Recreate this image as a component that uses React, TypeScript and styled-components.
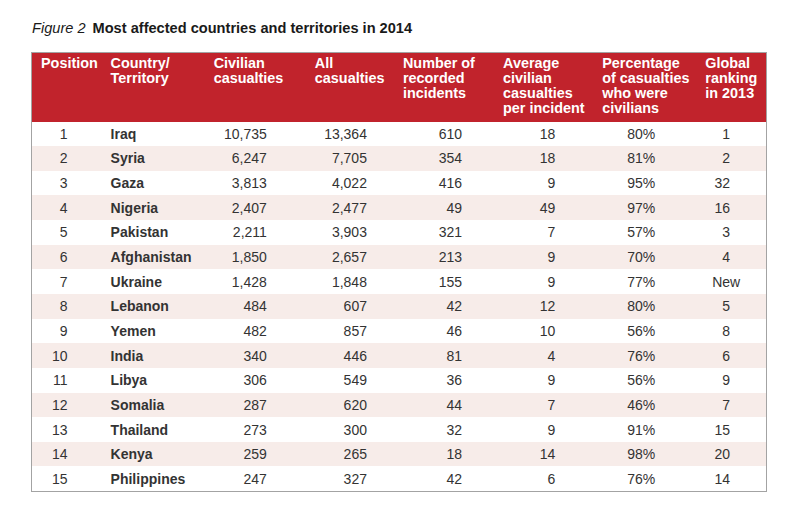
import React from "react";
import styled, { createGlobalStyle } from "styled-components";

const GlobalStyle = createGlobalStyle`
  html, body { margin: 0; padding: 0; background: #ffffff; }
  body { font-family: "Liberation Sans", Arial, Helvetica, sans-serif; color: #333333; }
`;

const Page = styled.div`
  width: 800px;
  height: 517px;
  padding: 19px 0 0 32px;
  box-sizing: border-box;
  overflow: hidden;
`;

const Title = styled.h1`
  margin: 0 0 15px 0;
  font-size: 14.6px;
  line-height: 18px;
  font-weight: normal;
  color: #1a1a1a;
  white-space: nowrap;
`;

const FigLabel = styled.span`
  font-style: italic;
  margin-right: 7px;
`;

const FigText = styled.span`
  font-weight: bold;
`;

const Table = styled.table`
  margin-left: -1px;
  border-collapse: collapse;
  table-layout: fixed;
  width: 736px;
  border: 1px solid #a3a3a3;
  font-size: 14px;
`;

const HeadCell = styled.th`
  background: #c1232c;
  color: #ffffff;
  font-weight: bold;
  font-size: 14.4px;
  text-align: left;
  vertical-align: top;
  padding: 3px 0 0 9px;
  height: 69px;
  line-height: 15px;
  box-sizing: border-box;
  white-space: nowrap;
`;

const Row = styled.tr<{ $shaded: boolean }>`
  background: ${(p) => (p.$shaded ? "#f7ece9" : "#ffffff")};
  height: 24.65px;
`;

const Cell = styled.td<{ $pr?: number; $align?: string; $bold?: boolean }>`
  padding: 0 ${(p) => p.$pr ?? 0}px 0 ${(p) => (p.$align === "left" ? 9 : 0)}px;
  text-align: ${(p) => p.$align ?? "right"};
  font-weight: ${(p) => (p.$bold ? "bold" : "normal")};
  color: #333333;
  line-height: 16px;
  white-space: nowrap;
`;

const widths = [70, 103, 101, 88, 100, 99, 103, 70];

const headers: string[][] = [
  ["Position"],
  ["Country/", "Territory"],
  ["Civilian", "casualties"],
  ["All", "casualties"],
  ["Number of", "recorded", "incidents"],
  ["Average", "civilian", "casualties", "per incident"],
  ["Percentage", "of casualties", "who were", "civilians"],
  ["Global", "ranking", "in 2013"],
];

const rows: string[][] = [
  ["1", "Iraq", "10,735", "13,364", "610", "18", "80%", "1"],
  ["2", "Syria", "6,247", "7,705", "354", "18", "81%", "2"],
  ["3", "Gaza", "3,813", "4,022", "416", "9", "95%", "32"],
  ["4", "Nigeria", "2,407", "2,477", "49", "49", "97%", "16"],
  ["5", "Pakistan", "2,211", "3,903", "321", "7", "57%", "3"],
  ["6", "Afghanistan", "1,850", "2,657", "213", "9", "70%", "4"],
  ["7", "Ukraine", "1,428", "1,848", "155", "9", "77%", "New"],
  ["8", "Lebanon", "484", "607", "42", "12", "80%", "5"],
  ["9", "Yemen", "482", "857", "46", "10", "56%", "8"],
  ["10", "India", "340", "446", "81", "4", "76%", "6"],
  ["11", "Libya", "306", "549", "36", "9", "56%", "9"],
  ["12", "Somalia", "287", "620", "44", "7", "46%", "7"],
  ["13", "Thailand", "273", "300", "32", "9", "91%", "15"],
  ["14", "Kenya", "259", "265", "18", "14", "98%", "20"],
  ["15", "Philippines", "247", "327", "42", "6", "76%", "14"],
];

const rightPad = [34, 0, 39, 27, 32, 38, 41, 36];

export default function App() {
  return (
    <Page>
      <GlobalStyle />
      <Title>
        <FigLabel>Figure 2</FigLabel>
        <FigText>Most affected countries and territories in 2014</FigText>
      </Title>
      <Table>
        <colgroup>
          {widths.map((w, i) => (
            <col key={i} style={{ width: w }} />
          ))}
        </colgroup>
        <thead>
          <tr>
            {headers.map((lines, i) => (
              <HeadCell key={i}>
                {lines.map((l, j) => (
                  <React.Fragment key={j}>
                    {j > 0 && <br />}
                    {l}
                  </React.Fragment>
                ))}
              </HeadCell>
            ))}
          </tr>
        </thead>
        <tbody>
          {rows.map((r, ri) => (
            <Row key={ri} $shaded={ri % 2 === 1}>
              {r.map((v, ci) => {
                if (ci === 1)
                  return (
                    <Cell key={ci} $align="left" $bold>
                      {v}
                    </Cell>
                  );
                if (v === "New")
                  return (
                    <Cell key={ci} $align="center" $pr={10}>
                      {v}
                    </Cell>
                  );
                return (
                  <Cell key={ci} $pr={rightPad[ci]}>
                    {v}
                  </Cell>
                );
              })}
            </Row>
          ))}
        </tbody>
      </Table>
    </Page>
  );
}
